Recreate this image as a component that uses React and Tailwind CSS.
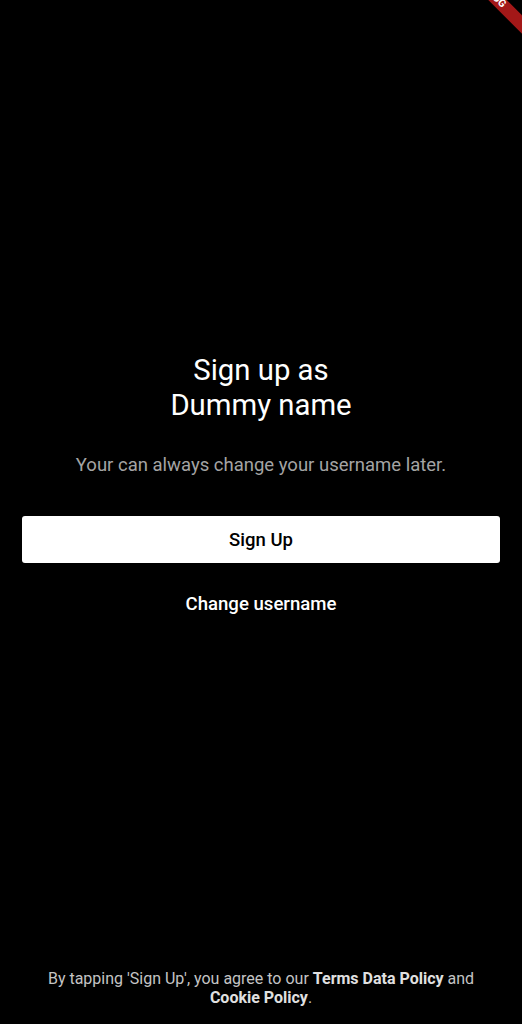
const SignUpAsPage = () => {
  const username = 'Dummy name';

  return (
    <div className="relative w-full h-[1024px] bg-black overflow-hidden flex flex-col font-['Roboto',sans-serif]">
      {/* debug ribbon, top right corner */}
      <div className="absolute left-[432px] top-[-12px] w-[120px] h-[13px] rotate-45 bg-[#a31818] flex items-center justify-center">
        <span className="text-white text-[10.5px] font-bold leading-none">DEBUG</span>
      </div>

      <div className="flex-1 flex flex-col items-center justify-center px-[22px]">
        <h1 className="text-white text-[29.3px] leading-[35px] text-center">
          Sign up as
          <br />
          {username}
        </h1>
        <p className="mt-[30px] text-[#a4a4a4] text-[18.5px] leading-[24px] text-center">
          Your can always change your username later.
        </p>
        <button
          type="button"
          className="mt-[39px] w-full h-[47px] bg-white rounded-[3px] text-black text-[18.5px] font-medium leading-[49px]"
        >
          Sign Up
        </button>
        <button type="button" className="mt-[29px] text-white text-[18.6px] font-medium leading-[24px]">
          Change username
        </button>
      </div>

      <p className="px-10 pb-[17px] text-center text-[16px] leading-[19px] text-[#c4c4c4]">
        By tapping 'Sign Up', you agree to our{' '}
        <span className="font-bold text-[#e0e0e0]">Terms Data Policy</span> and{' '}
        <span className="font-bold text-[#e0e0e0]">Cookie Policy</span>.
      </p>
    </div>
  );
};

export default function App() {
  return <SignUpAsPage />;
}
